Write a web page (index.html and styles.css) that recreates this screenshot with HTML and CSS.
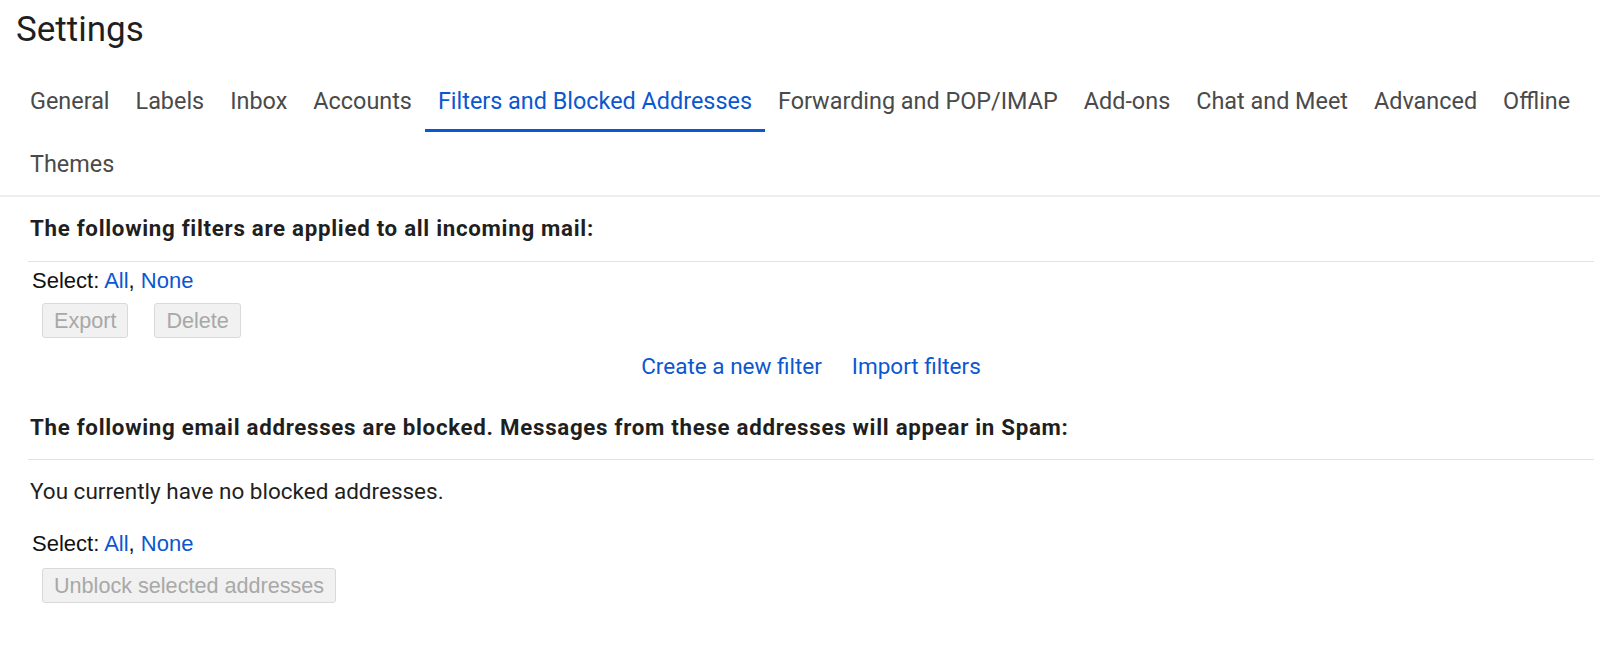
FILE: index.html
```html
<!DOCTYPE html>
<html lang="en">
<head>
<meta charset="utf-8">
<title>Settings</title>
<link rel="stylesheet" href="styles.css">
</head>
<body>
  <header class="page-head">
    <h1 class="title">Settings</h1>
    <nav class="tabs">
      <a class="tab">General</a>
      <a class="tab">Labels</a>
      <a class="tab">Inbox</a>
      <a class="tab">Accounts</a>
      <a class="tab active">Filters and Blocked Addresses</a>
      <a class="tab">Forwarding and POP/IMAP</a>
      <a class="tab">Add-ons</a>
      <a class="tab">Chat and Meet</a>
      <a class="tab">Advanced</a>
      <a class="tab">Offline</a>
      <span class="tab-break"></span>
      <a class="tab">Themes</a>
    </nav>
  </header>

  <main class="content">
    <section class="block">
      <h2 class="section-head">The following filters are applied to all incoming mail:</h2>
      <div class="select-row">Select: <a class="link">All</a>, <a class="link">None</a></div>
      <div class="btn-row">
        <button class="btn" disabled>Export</button>
        <button class="btn" disabled>Delete</button>
      </div>
      <div class="link-row">
        <a class="link">Create a new filter</a>
        <a class="link">Import filters</a>
      </div>
    </section>

    <section class="block">
      <h2 class="section-head second">The following email addresses are blocked. Messages from these addresses will appear in Spam:</h2>
      <p class="empty">You currently have no blocked addresses.</p>
      <div class="select-row second">Select: <a class="link">All</a>, <a class="link">None</a></div>
      <div class="btn-row tight">
        <button class="btn" disabled>Unblock selected addresses</button>
      </div>
    </section>
  </main>
</body>
</html>
```

FILE: styles.css
```css
* { box-sizing: border-box; }

html, body {
  margin: 0;
  padding: 0;
  background: #ffffff;
}

body {
  font-family: Roboto, "Liberation Sans", Arial, sans-serif;
  color: #1f1f1f;
  width: 1600px;
  height: 645px;
  overflow: hidden;
}

.page-head {
  border-bottom: 2px solid #eeeeee;
}

.title {
  margin: 0;
  padding: 10px 0 0 16px;
  font-size: 35px;
  font-weight: 400;
  line-height: 40px;
  height: 69px;
  color: #1f1f1f;
  letter-spacing: 0;
}

.tabs {
  display: flex;
  flex-wrap: wrap;
  padding-left: 17px;
}

.tab {
  display: flex;
  align-items: center;
  height: 63px;
  padding: 0 13px;
  font-size: 23.4px;
  color: #4a4a4a;
  border-bottom: 3px solid transparent;
  padding-top: 3px;
  white-space: nowrap;
  cursor: pointer;
}

.tab.active {
  color: #0b57d0;
  border-bottom-color: #0b57d0;
}

.tab-break {
  flex-basis: 100%;
  height: 0;
}

.content {
  margin: 0 6px 0 28px;
}

.section-head {
  margin: 0;
  padding: 16px 0 18px 2px;
  line-height: 30px;
  font-size: 22.3px;
  font-weight: 700;
  letter-spacing: 0.7px;
  color: #1f1f1f;
  border-bottom: 1px solid #e3e3e3;
}

.section-head.second {
  padding-top: 31px;
  padding-bottom: 17px;
}

.select-row {
  margin-top: 6px;
  padding-left: 4px;
  font-family: "Liberation Sans", Arial, sans-serif;
  font-size: 22px;
  line-height: 26px;
  color: #111111;
}

.select-row.second {
  margin-top: 25px;
}

.link {
  color: #0b57d0;
  text-decoration: none;
  cursor: pointer;
}

.btn-row {
  display: flex;
  gap: 26px;
  margin-top: 9px;
  padding-left: 14px;
}

.btn-row.tight {
  margin-top: 11px;
}

.btn {
  height: 35px;
  padding: 0 11px;
  font-family: "Liberation Sans", Arial, sans-serif;
  font-size: 21.6px;
  color: #a8a8a8;
  background: #f1f1f1;
  border: 1px solid #d9d9d9;
  border-radius: 3px;
}

.link-row {
  display: flex;
  justify-content: center;
  gap: 30px;
  margin-top: 13px;
  line-height: 30px;
  font-size: 22.5px;
}

.empty {
  margin: 16px 0 0;
  padding-left: 2px;
  font-size: 22.5px;
  line-height: 30px;
  color: #1f1f1f;
}
```
